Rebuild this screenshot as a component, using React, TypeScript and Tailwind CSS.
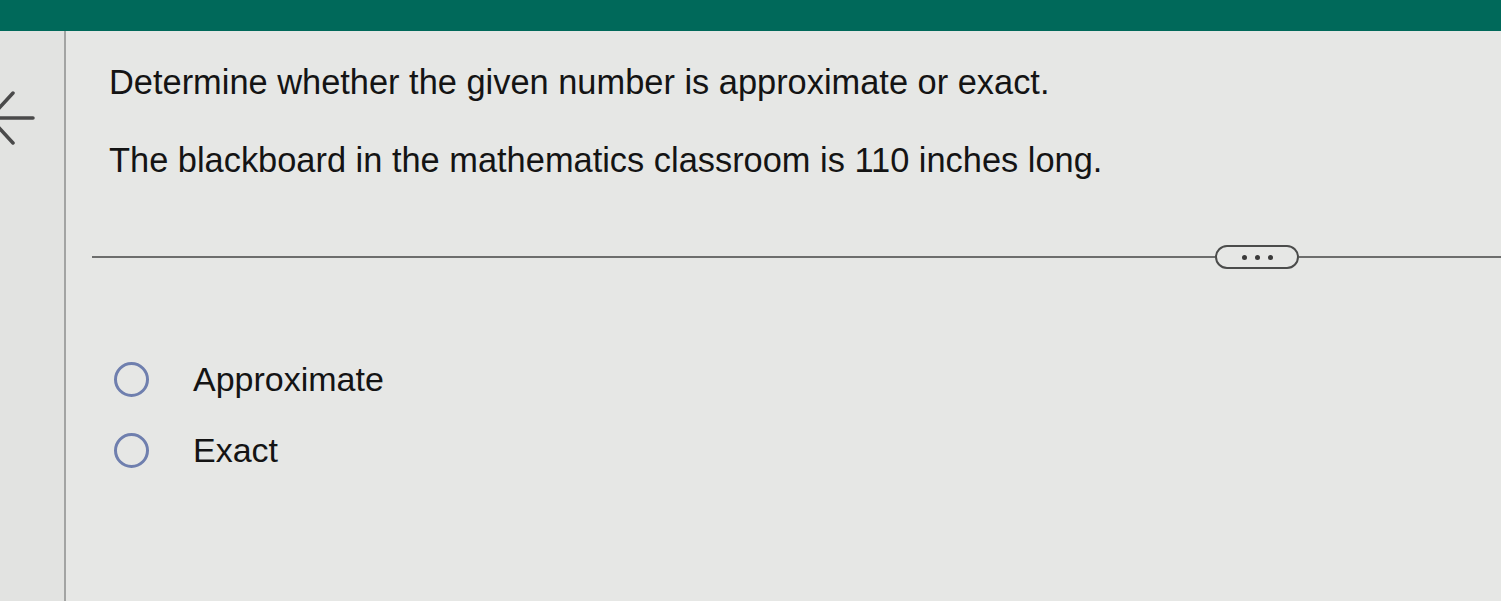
import React from "react";

export default function App() {
  return (
    <div className="w-[1501px] h-[601px] overflow-hidden bg-[#e6e7e5] flex flex-col" style={{ fontFamily: '"Liberation Sans", Arial, sans-serif' }}>
      <div className="h-[31px] bg-[#00695a] shrink-0" />
      <div className="flex flex-1 min-h-0">
        <div className="w-[66px] shrink-0 border-r-2 border-[#a3a4a3] bg-[#e2e3e1] relative">
          <svg className="absolute left-0 top-[58px]" width="40" height="60" viewBox="0 0 40 60">
            <path d="M13 4 L-10 29 L13 54 M-10 29 L33 29" fill="none" stroke="#4a4a4a" strokeWidth="3.5" strokeLinecap="round" />
          </svg>
        </div>
        <div className="flex-1 flex flex-col">
          <div className="pl-[43px] pt-[31px] text-[#141414] text-[34.4px] leading-[40px]">
            <p>Determine whether the given number is approximate or exact.</p>
            <p className="mt-[38px]">The blackboard in the mathematics classroom is 110 inches long.</p>
          </div>
          <div className="ml-[26px] mt-[65px] flex items-center">
            <div className="h-[2px] bg-[#6d6e6d] w-[1123px]" />
            <div className="w-[84px] h-[24px] rounded-full border-2 border-[#4b4c4b] flex items-center justify-center gap-[8px] shrink-0">
              <span className="w-[5px] h-[5px] rounded-full bg-[#3a3a3a]" />
              <span className="w-[5px] h-[5px] rounded-full bg-[#3a3a3a]" />
              <span className="w-[5px] h-[5px] rounded-full bg-[#3a3a3a]" />
            </div>
            <div className="h-[2px] bg-[#6d6e6d] flex-1" />
          </div>
          <div className="pl-[48px] mt-[93px] flex flex-col gap-[36px] text-[34px] text-[#141414]">
            <label className="flex items-center gap-[44px] h-[35px]">
              <span className="w-[35px] h-[35px] rounded-full border-[3px] border-[#6f7fae] shrink-0" />
              <span>Approximate</span>
            </label>
            <label className="flex items-center gap-[44px] h-[35px]">
              <span className="w-[35px] h-[35px] rounded-full border-[3px] border-[#6f7fae] shrink-0" />
              <span>Exact</span>
            </label>
          </div>
        </div>
      </div>
    </div>
  );
}
